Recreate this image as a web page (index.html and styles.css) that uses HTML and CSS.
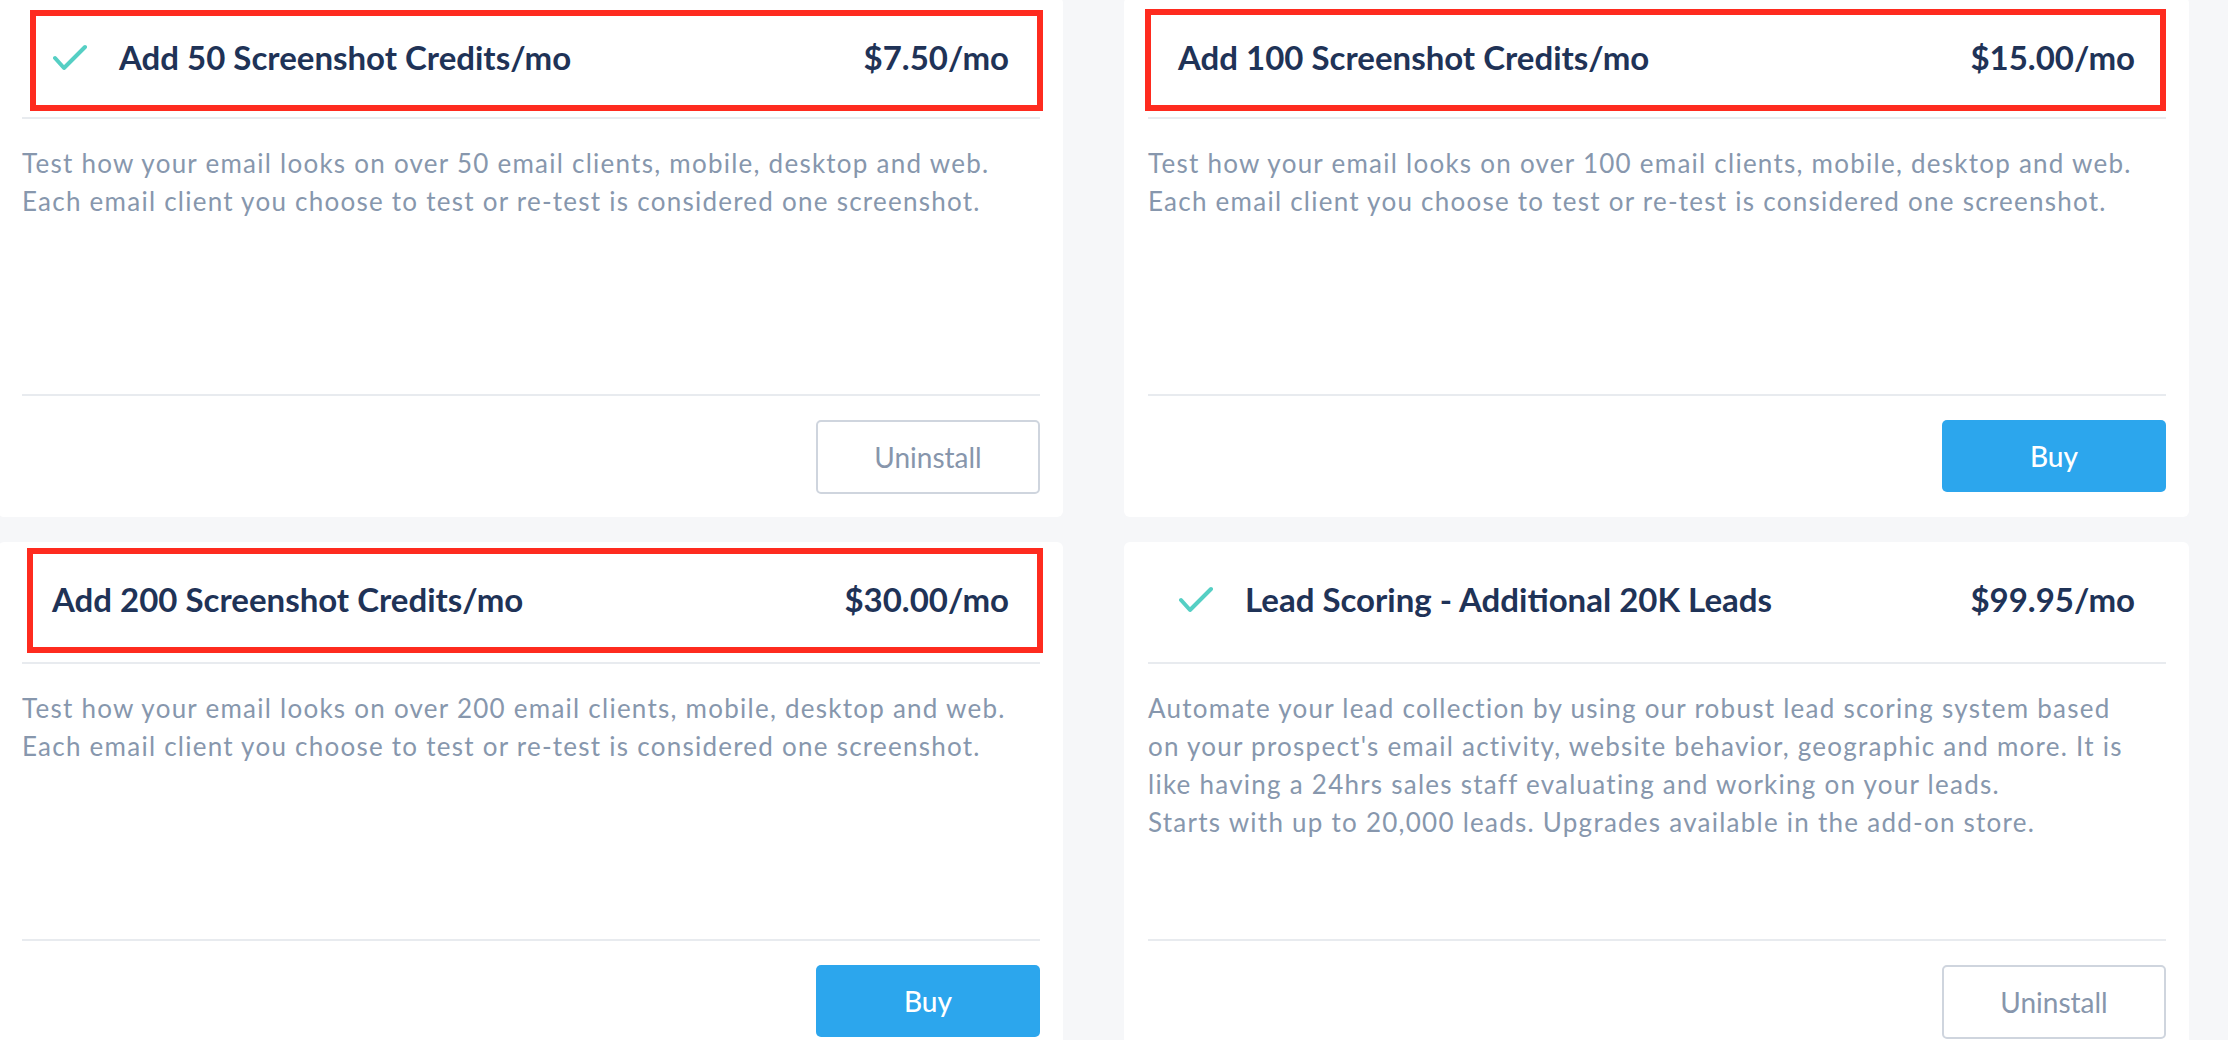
FILE: index.html
```html
<!DOCTYPE html>
<html lang="en">
<head>
<meta charset="utf-8">
<title>Add-ons</title>
<link rel="stylesheet" href="styles.css">
</head>
<body>
<div class="grid">
  <div class="card">
    <div class="mark mark-tl"></div>
    <div class="card-head">
      <svg class="check" viewBox="0 0 36 28" width="36" height="28"><polyline points="2,14 11,24 32,3" fill="none" stroke="#55cfc4" stroke-width="4" stroke-linecap="round" stroke-linejoin="round"/></svg>
      <span class="title">Add 50 Screenshot Credits/mo</span>
      <span class="price">$7.50/mo</span>
    </div>
    <div class="card-body">Test how your email looks on over 50 email clients, mobile, desktop and web.<br>Each email client you choose to test or re-test is considered one screenshot.</div>
    <div class="card-foot"><button class="btn btn-outline">Uninstall</button></div>
  </div>
  <div class="card">
    <div class="mark mark-tr"></div>
    <div class="card-head">
      <span class="title">Add 100 Screenshot Credits/mo</span>
      <span class="price">$15.00/mo</span>
    </div>
    <div class="card-body">Test how your email looks on over 100 email clients, mobile, desktop and web.<br>Each email client you choose to test or re-test is considered one screenshot.</div>
    <div class="card-foot"><button class="btn btn-primary">Buy</button></div>
  </div>
  <div class="card">
    <div class="mark mark-bl"></div>
    <div class="card-head">
      <span class="title">Add 200 Screenshot Credits/mo</span>
      <span class="price">$30.00/mo</span>
    </div>
    <div class="card-body">Test how your email looks on over 200 email clients, mobile, desktop and web.<br>Each email client you choose to test or re-test is considered one screenshot.</div>
    <div class="card-foot"><button class="btn btn-primary">Buy</button></div>
  </div>
  <div class="card">
    <div class="card-head">
      <svg class="check" viewBox="0 0 36 28" width="36" height="28"><polyline points="2,14 11,24 32,3" fill="none" stroke="#55cfc4" stroke-width="4" stroke-linecap="round" stroke-linejoin="round"/></svg>
      <span class="title">Lead Scoring - Additional 20K Leads</span>
      <span class="price">$99.95/mo</span>
    </div>
    <div class="card-body">Automate your lead collection by using our robust lead scoring system based<br>on your prospect's email activity, website behavior, geographic and more. It is<br>like having a 24hrs sales staff evaluating and working on your leads.<br>Starts with up to 20,000 leads. Upgrades available in the add-on store.</div>
    <div class="card-foot"><button class="btn btn-outline">Uninstall</button></div>
  </div>
</div>
</body>
</html>
```
FILE: styles.css
```css
html, body {
  margin: 0;
  padding: 0;
  background: #f6f7f9;
  overflow: hidden;
}
body {
  width: 2228px;
  height: 1040px;
  font-family: Lato, "Open Sans", Arial, sans-serif;
}
.grid {
  display: grid;
  grid-template-columns: 1065px 1065px;
  grid-auto-rows: 520px;
  column-gap: 61px;
  row-gap: 25px;
  margin: -3px 0 0 -2px;
}
.card {
  position: relative;
  background: #ffffff;
  border-radius: 6px;
  padding: 0 23px 0 24px;
  display: flex;
  flex-direction: column;
}
.card-head {
  height: 120px;
  display: flex;
  align-items: center;
  padding: 0 31px 0 30px;
  border-bottom: 2px solid #e8ebef;
  color: #1f3357;
}
.card:nth-child(n+3) .card-head {
  padding-bottom: 6px;
  height: 114px;
}
.check {
  flex: none;
  margin: 2px 30px 0 1px;
}
.title {
  font-size: 33px;
  font-weight: 700;
  flex: 1;
}
.price {
  font-size: 33px;
  font-weight: 700;
}
.card-body {
  height: 250px;
  padding-top: 25px;
  font-size: 26px;
  letter-spacing: 1.25px;
  line-height: 38px;
  color: #8797ad;
  white-space: nowrap;
}
.card-foot {
  border-top: 2px solid #e8ebef;
  padding: 24px 0 20px;
  display: flex;
  justify-content: flex-end;
}
.btn {
  width: 224px;
  height: 74px;
  border-radius: 5px;
  font-family: Lato, "Open Sans", Arial, sans-serif;
  font-size: 28px;
  cursor: pointer;
}
.btn-outline {
  background: #ffffff;
  border: 2px solid #cfd5de;
  color: #8796ac;
}
.btn-primary {
  height: 72px;
  background: #2ca6ed;
  border: none;
  color: #ffffff;
  font-weight: 500;
}
.mark {
  position: absolute;
  border: 6px solid #fe2b1f;
  box-sizing: border-box;
  pointer-events: none;
}
.mark-tl { left: 32px; top: 13px; width: 1013px; height: 101px; }
.mark-tr { left: 21px; top: 12px; width: 1021px; height: 102px; }
.mark-bl { left: 29px; top: 6px; width: 1016px; height: 105px; }
```
